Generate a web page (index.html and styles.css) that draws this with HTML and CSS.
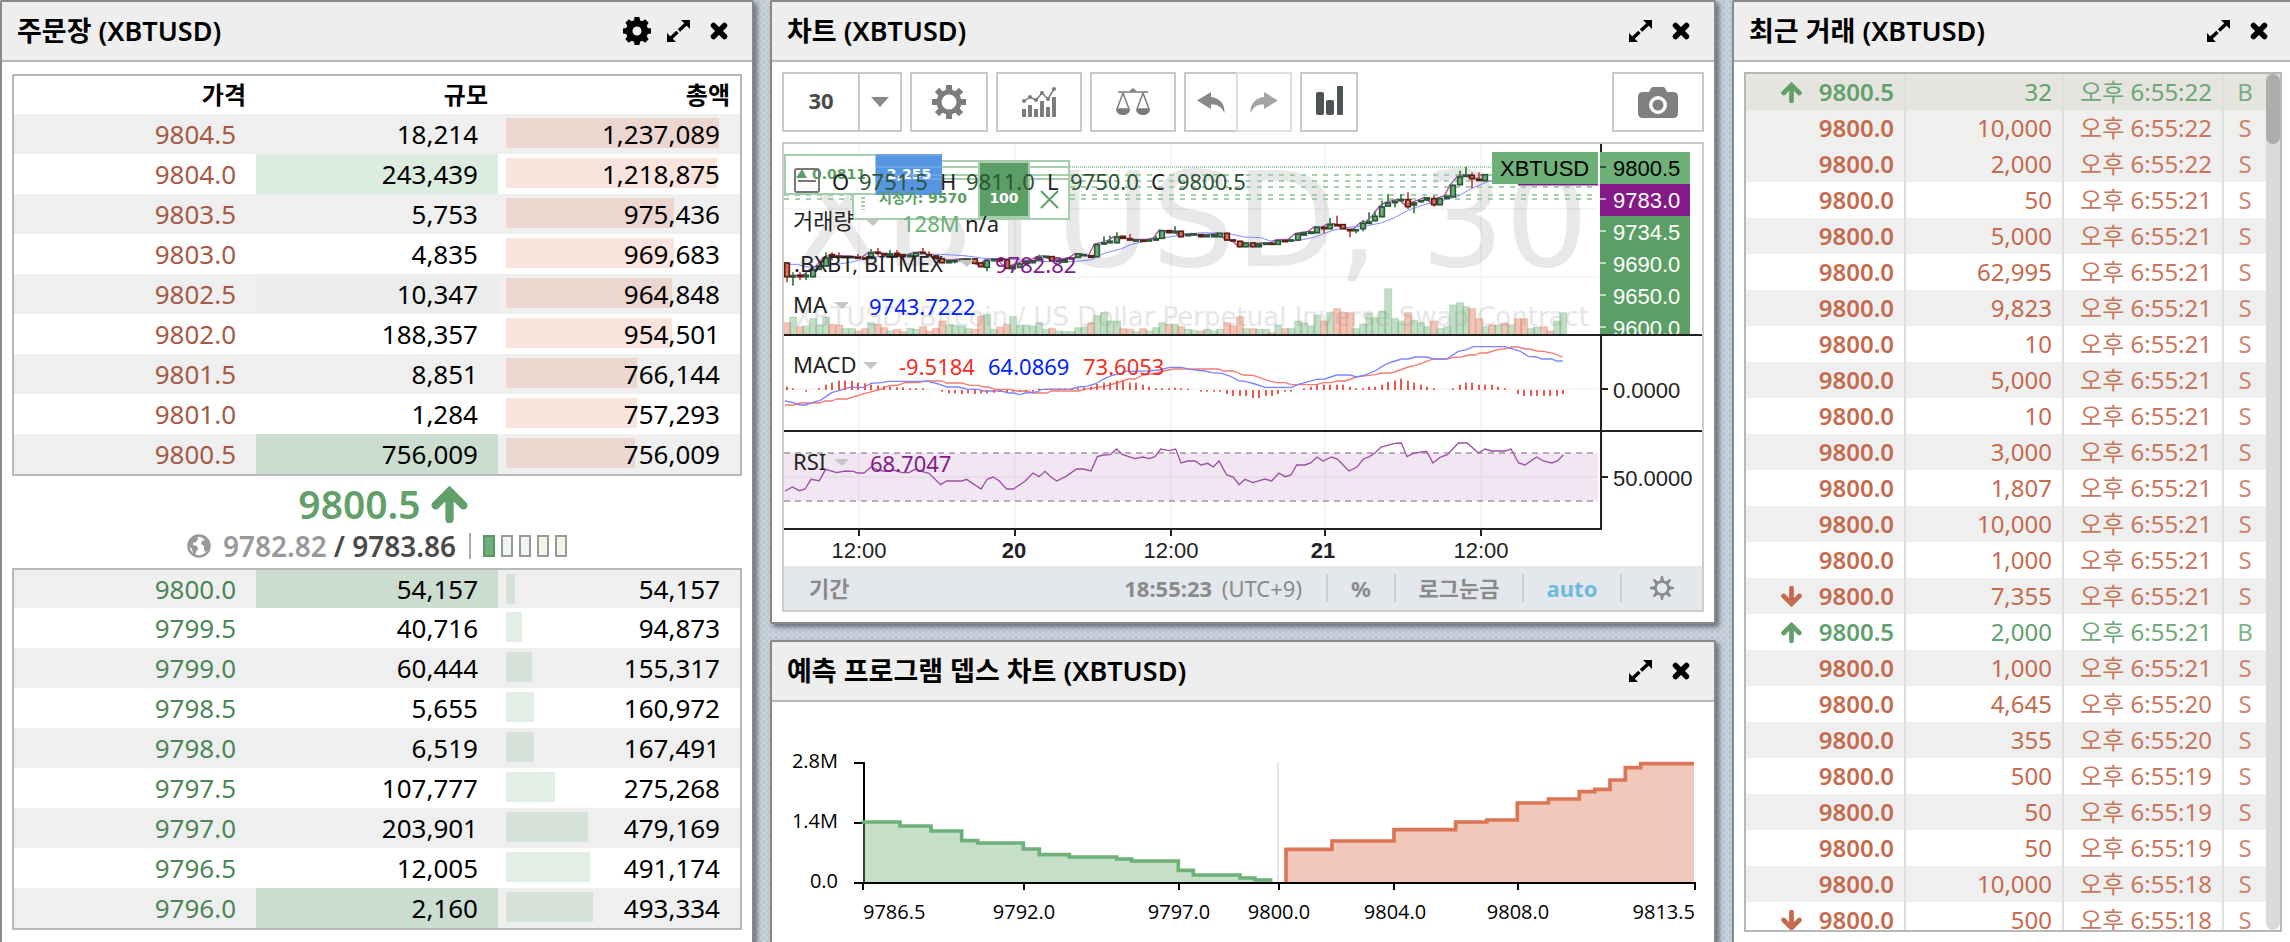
FILE: index.html
```html
<!DOCTYPE html>
<html lang="ko">
<head>
<meta charset="utf-8">
<title>XBTUSD</title>
<link rel="stylesheet" href="styles.css">
</head>
<body>
<svg class="sprite" aria-hidden="true">
  <symbol id="i-gear" viewBox="0 0 34 34">
    <g fill="currentColor">
      <path fill-rule="evenodd" d="M17 4.500a12.500 12.500 0 1 0 0 25a12.500 12.500 0 1 0 0-25zM17 9.500a7.500 7.500 0 1 1 0 15a7.500 7.500 0 1 1 0-15z"/>
      <path id="tooth" d="M14 0h6v6h-6z"/>
      <use href="#tooth" transform="rotate(45 17 17)"/><use href="#tooth" transform="rotate(90 17 17)"/>
      <use href="#tooth" transform="rotate(135 17 17)"/><use href="#tooth" transform="rotate(180 17 17)"/>
      <use href="#tooth" transform="rotate(225 17 17)"/><use href="#tooth" transform="rotate(270 17 17)"/>
      <use href="#tooth" transform="rotate(315 17 17)"/>
    </g>
  </symbol>
  <symbol id="i-cog" viewBox="0 0 34 34">
    <g fill="currentColor">
      <path fill-rule="evenodd" d="M17 3.500a13.500 13.500 0 1 0 0 27a13.500 13.500 0 1 0 0-27zM17 11.500a5.500 5.500 0 1 1 0 11a5.500 5.500 0 1 1 0-11z"/>
      <path id="cogtooth" d="M14 0h6l1 6h-8z"/>
      <use href="#cogtooth" transform="rotate(45 17 17)"/><use href="#cogtooth" transform="rotate(90 17 17)"/>
      <use href="#cogtooth" transform="rotate(135 17 17)"/><use href="#cogtooth" transform="rotate(180 17 17)"/>
      <use href="#cogtooth" transform="rotate(225 17 17)"/><use href="#cogtooth" transform="rotate(270 17 17)"/>
      <use href="#cogtooth" transform="rotate(315 17 17)"/>
    </g>
  </symbol>
  <symbol id="i-sun" viewBox="0 0 24 24">
    <circle cx="12" cy="12" r="6.500" fill="none" stroke="currentColor" stroke-width="2.500"/>
    <g fill="currentColor">
      <path id="ray" d="M10 5L11 0h2l1 5z"/>
      <use href="#ray" transform="rotate(45 12 12)"/><use href="#ray" transform="rotate(90 12 12)"/>
      <use href="#ray" transform="rotate(135 12 12)"/><use href="#ray" transform="rotate(180 12 12)"/>
      <use href="#ray" transform="rotate(225 12 12)"/><use href="#ray" transform="rotate(270 12 12)"/>
      <use href="#ray" transform="rotate(315 12 12)"/>
    </g>
  </symbol>
  <symbol id="i-expand" viewBox="0 0 23 22">
    <path d="M14 0h9v9zM0 13v9h9z" fill="currentColor"/>
    <path d="M19 4l-7 6.500M10.500 12l-7 6.500" stroke="currentColor" stroke-width="3.500" fill="none"/>
  </symbol>
  <symbol id="i-close" viewBox="0 0 18 18">
    <path d="M3.500 3.500l11 11M14.500 3.500l-11 11" stroke="currentColor" stroke-width="5.500" stroke-linecap="round"/>
  </symbol>
  <symbol id="i-up" viewBox="0 0 20 20">
    <path d="M10 18V4M2.500 10.500L10 3l7.500 7.500" stroke="currentColor" stroke-width="4.500" stroke-linecap="round" fill="none"/>
  </symbol>
  <symbol id="i-down" viewBox="0 0 20 20">
    <path d="M10 2v14M2.500 9.500L10 17l7.500-7.500" stroke="currentColor" stroke-width="4.500" stroke-linecap="round" fill="none"/>
  </symbol>
  <symbol id="i-globe" viewBox="0 0 24 24">
    <circle cx="12" cy="12" r="10.500" fill="none" stroke="currentColor" stroke-width="2.500"/>
    <path fill="currentColor" d="M5 4l5-2 1 3-2 3-3 1 0 2 4 1 1 3-2 3-1 4-2-3-1-4-3-3-1-3zM15 3l5 3 2 6-1 4-3 2-1-3v-3l-3-2 1-3 3-1-3-2z"/>
  </symbol>
</svg>

<main class="workspace">
  <section class="panel">
    <header class="panel-head">
      <h2>주문장 (XBTUSD)</h2>
      <div class="head-tools">
        <button aria-label="설정"><svg class="ic-cog"><use href="#i-cog"/></svg></button>
        <button aria-label="확대"><svg class="ic-expand"><use href="#i-expand"/></svg></button>
        <button aria-label="닫기"><svg class="ic-close"><use href="#i-close"/></svg></button>
      </div>
    </header>
    <div class="book">
      <table class="orders asks">
        <thead><tr><th>가격</th><th>규모</th><th>총액</th></tr></thead>
        <tbody id="asks"></tbody>
      </table>
      <div class="ticker">
        <div class="last">9800.5<svg class="ic-last"><use href="#i-up"/></svg></div>
        <div class="marks">
          <svg class="ic-globe"><use href="#i-globe"/></svg>
          <span class="index">9782.82</span><span class="mark">/ 9783.86</span>
          <span class="level"><i class="on"></i><i></i><i></i><i class="warm"></i><i class="warm"></i></span>
        </div>
      </div>
      <table class="orders bids"><tbody id="bids"></tbody></table>
    </div>
  </section>

  <div class="column">
    <section class="panel">
      <header class="panel-head">
        <h2>차트 (XBTUSD)</h2>
        <div class="head-tools">
          <button aria-label="확대"><svg class="ic-expand"><use href="#i-expand"/></svg></button>
          <button aria-label="닫기"><svg class="ic-close"><use href="#i-close"/></svg></button>
        </div>
      </header>
      <div class="chart-body">
        <div class="toolbar">
          <div class="group">
            <button class="interval">30</button>
            <button class="drop" aria-label="간격"><svg viewBox="0 0 18 10"><path d="M0 0h18L9 10z" fill="#888"/></svg></button>
          </div>
          <button class="tool w78" aria-label="속성"><svg width="34" height="34"><use href="#i-gear"/></svg></button>
          <button class="tool w86" aria-label="지표">
            <svg width="34" height="30" viewBox="0 0 34 30"><g fill="#7c7c7c"><path d="M0 22h4v8H0zM6 18h4v12H6zM12 22h4v8h-4zM18 14h4v16h-4zM24 20h4v10h-4zM30 10h4v20h-4z"/><circle cx="2" cy="14" r="2"/><circle cx="8" cy="10" r="2"/><circle cx="14" cy="13" r="2"/><circle cx="20" cy="6" r="2"/><circle cx="26" cy="12" r="2"/><circle cx="32" cy="2" r="2"/></g><path d="M2 14l6-4 6 3 6-7 6 6 6-10" fill="none" stroke="#7c7c7c" stroke-width="1.500"/></svg>
          </button>
          <button class="tool w86" aria-label="비교">
            <svg width="34" height="28" viewBox="0 0 34 28"><g fill="none" stroke="#7c7c7c" stroke-width="1.500"><path d="M2 4h30M7 5L1 21M7 5l6 16M27 5l-6 16M27 5l6 16M1 21h12M21 21h12"/></g><path fill="#7c7c7c" d="M0 21h14c0 8-14 8-14 0zM20 21h14c0 8-14 8-14 0zM13 3.500L17 0l4 3.500z"/></svg>
          </button>
          <div class="group">
            <button class="undo" aria-label="실행 취소"><svg width="28" height="21" viewBox="0 0 28 21"><path fill="#888" d="M0 8.500L14 0v5c9 1 14 7 13.500 16C24 14 20 12.500 14 12.500V17z"/></svg></button>
            <button class="redo" aria-label="다시 실행"><svg width="28" height="21" viewBox="0 0 28 21"><path fill="#a5a5a5" d="M28 8.500L14 0v5C5 6 0 12 .5 21 4 14 8 12.500 14 12.500V17z"/></svg></button>
          </div>
          <button class="tool w58" aria-label="차트 유형"><svg class="bars" width="27" height="29" viewBox="0 0 27 29"><g fill="#4d5456"><rect y="6" width="8" height="23" rx="2"/><rect x="10" y="14" width="8" height="15" rx="2"/><rect x="21" width="6" height="29" rx="1"/></g></svg></button>
          <button class="tool w92 camera" aria-label="스크린샷"><svg width="40" height="31" viewBox="0 0 40 31"><path fill="#808080" fill-rule="evenodd" d="M5 5h6l2-4q1-1 2-1h10q1 0 2 1l2 4h6q5 0 5 5v16q0 5-5 5H5q-5 0-5-5V10q0-5 5-5zM20 9a9 9 0 1 0 0 18a9 9 0 1 0 0-18z"/><circle cx="20" cy="18" r="5.500" fill="#808080"/></svg></button>
        </div>
        <div class="chart-frame">
          <svg id="price-chart" viewBox="784 144 918 422" role="img" aria-label="XBTUSD 30"></svg>
          <footer class="status">
            <button class="range">기간</button>
            <span class="clock"><b>18:55:23</b> (UTC+9)</span>
            <button class="percent">%</button>
            <button class="log">로그눈금</button>
            <button class="auto">auto</button>
            <button class="prefs" aria-label="설정"><svg width="24" height="24"><use href="#i-sun"/></svg></button>
          </footer>
        </div>
      </div>
    </section>

    <section class="panel grow">
      <header class="panel-head">
        <h2>예측 프로그램 뎁스 차트 (XBTUSD)</h2>
        <div class="head-tools">
          <button aria-label="확대"><svg class="ic-expand"><use href="#i-expand"/></svg></button>
          <button aria-label="닫기"><svg class="ic-close"><use href="#i-close"/></svg></button>
        </div>
      </header>
      <svg class="depth" viewBox="772 702 942 240" role="img" aria-label="depth">
        <path d="M854 763h10v120M854 823h9M854 883h841v7M863 883v7M1024 883v7M1179 883v7M1279 883v7M1394 883v7M1518 883v7" fill="none" stroke="#000" stroke-width="2"/>
        <path d="M1278 762v120" stroke="#e4e8ec" stroke-width="2"/>
        <g transform="translate(765 620) scale(.33333)">
          <path fill="#6db078" fill-opacity=".4" d="M294 786V606H405V618H498V633H590V662H638V669H775V687H823V704H913V711H1055V717H1100V723H1240V751H1285V765H1425V774H1470V779H1522V786z"/>
          <path fill="none" stroke="#6db078" stroke-width="11" d="M290 606H405V618H498V633H590V662H638V669H775V687H823V704H913V711H1055V717H1100V723H1240V751H1285V765H1425V774H1470V780H1522"/>
          <g transform="translate(1425 0)">
            <path fill="#dc7556" fill-opacity=".4" d="M138 786V688H276V663H462V629H647V606H740V600H832V549H925V537H1018V515H1064V508H1110V480H1156V443H1202V431H1255V428H1362V786z"/>
            <path fill="none" stroke="#dc7556" stroke-width="11" d="M138 786V688H276V663H462V629H647V606H740V600H832V549H925V537H1018V515H1064V508H1110V480H1156V443H1202V431H1362"/>
          </g>
        </g>
        <g class="depth-labels">
          <g text-anchor="end"><text x="838" y="768">2.8M</text><text x="838" y="828">1.4M</text><text x="838" y="888">0.0</text><text x="1695" y="919">9813.5</text></g>
          <text x="863" y="919">9786.5</text>
          <g text-anchor="middle"><text x="1024" y="919">9792.0</text><text x="1179" y="919">9797.0</text><text x="1279" y="919">9800.0</text><text x="1395" y="919">9804.0</text><text x="1518" y="919">9808.0</text></g>
        </g>
      </svg>
    </section>
  </div>

  <section class="panel">
    <header class="panel-head">
      <h2>최근 거래 (XBTUSD)</h2>
      <div class="head-tools">
        <button aria-label="확대"><svg class="ic-expand"><use href="#i-expand"/></svg></button>
        <button aria-label="닫기"><svg class="ic-close"><use href="#i-close"/></svg></button>
      </div>
    </header>
    <div class="trades">
      <div class="trades-view">
        <table>
          <colgroup><col class="c1"><col class="c2"><col class="c3"><col class="c4"></colgroup>
          <tbody id="trades"></tbody>
        </table>
      </div>
      <div class="track"><div class="thumb"></div></div>
    </div>
  </section>
</main>
<script src="app.js"></script>
</body>
</html>
```

FILE: styles.css
```css
* { box-sizing: border-box; }
html, body { height: 100%; margin: 0; }
body {
  overflow: hidden;
  font-family: "Noto Sans", "Noto Sans CJK KR", sans-serif;
  color: #000;
  background-color: #c9d3dc;
  background-image:
    radial-gradient(circle at 2px 2px, rgba(100, 120, 140, .18) 1px, transparent 2px),
    radial-gradient(circle at 5px 5px, rgba(100, 120, 140, .12) 1px, transparent 2px);
  background-size: 6px 6px;
}
button { border: 0; padding: 0; margin: 0; background: none; color: inherit; font: inherit; display: flex; align-items: center; justify-content: center; }
svg { display: block; }
.sprite { position: absolute; width: 0; height: 0; }

.workspace {
  display: grid;
  grid-template-columns: 754fr 946fr 562fr;
  grid-template-rows: minmax(0, 1fr);
  gap: 16px;
  height: calc(100vh + 2px);
  margin-right: -4px;
}
.column { display: flex; flex-direction: column; gap: 16px; min-width: 0; }
.panel {
  display: flex; flex-direction: column; min-width: 0;
  background: #fff; border: 2px solid #888; border-radius: 2px;
  box-shadow: 3px 3px 5px rgba(40, 45, 55, .6);
}
.grow { flex: 1; }
.panel-head {
  flex: none; height: 60px; padding: 0 24px 0 15px;
  display: flex; align-items: center; justify-content: space-between;
  background: #eee; border-bottom: 2px solid #b8b8b8;
}
.panel-head h2 { margin: 0; font-size: 27px; line-height: 36px; font-weight: 600; }
.head-tools { display: flex; align-items: center; gap: 20px; }
.ic-cog { width: 28px; height: 28px; }
.ic-expand { width: 23px; height: 22px; }
.ic-close { width: 18px; height: 18px; }
.head-tools button:first-child:nth-last-child(3) { margin-right: -4px; }

/* order book */
.book { padding: 12px 10px; }
.orders { width: 100%; table-layout: fixed; border-spacing: 0; border: 2px solid #b8b8b8; font-size: 26px; line-height: 36px; }
.orders th { height: 38px; padding: 0 10px 0 0; text-align: right; font-size: 24px; line-height: 36px; font-weight: 600; }
.orders td { height: 40px; padding: 0 20px 0 0; text-align: right; position: relative; }
.bids tr:first-child td { height: 38px; }
.orders tbody tr:nth-child(odd) { background: #efefef; }
.asks .price { color: #a65a43; }
.bids .price { color: #4c8657; }
.orders .flash { background: #cbddcf; }
.orders .flash-soft { background: #dcecdf; }
.orders .flash-faint { background: #ebedec; }
.bar-area { position: absolute; inset: 4px 0 4px 8px; }
.bar { display: block; height: 30px; }
.asks .bar { background: rgba(220, 117, 86, .2); }
.bids .bar { background: rgba(109, 176, 120, .2); }
.amount { position: relative; }

.ticker { height: 92px; display: flex; flex-direction: column; align-items: center; }
.last { display: flex; align-items: center; gap: 10px; height: 56px; padding-left: 12px; font-size: 39px; line-height: 56px; font-weight: 600; color: #62a06b; }
.ic-last { width: 37px; height: 37px; }
.marks { display: flex; align-items: center; height: 28px; font-size: 28px; line-height: 28px; font-weight: 600; }
.ic-globe { width: 24px; height: 24px; margin-right: 12px; color: #999; }
.index { color: #999; margin-right: 7px; }
.mark { color: #4a4a4a; margin-right: 13px; }
.level { display: flex; gap: 6px; border-left: 2px solid #aaa; padding: 2px 0 2px 12px; }
.level i { width: 12px; height: 22px; border: 2px solid #999; background: #eff6f0; }
.level .on { background: #6db078; border-color: #5f9468; }
.level .warm { background: #f5f4ea; }

/* chart */
.chart-body { padding: 10px; }
.toolbar { display: flex; gap: 8px; height: 60px; margin-bottom: 10px; }
.group { display: flex; }
.tool, .group button { height: 60px; border: 2px solid #c8c8c8; color: #7c7c7c; }
.group .interval { width: 76px; padding-bottom: 4px; border-right: 0; font-size: 22px; font-weight: 700; color: #4a4a4a; }
.group .drop { width: 44px; }
.drop svg { width: 18px; height: 10px; }
.w78 { width: 78px; }
.w86 { width: 86px; }
.w58 { width: 58px; }
.w92 { width: 92px; }
.group .undo { width: 52px; border-right: 0; }
.group .redo { width: 56px; border-color: #dbe0e6; }
.bars { margin-bottom: 4px; }
.camera { margin-left: auto; }
.chart-frame { border: 2px solid #ccc; }
#price-chart { width: 100%; }
.ax { font: 22px "Liberation Sans", sans-serif; fill: #222; }
.lg { font-size: 22px; }
.wm-big { font: 132px "DejaVu Sans", sans-serif; fill: #e8e8e8; }
.wm { font: 26px "DejaVu Sans", sans-serif; fill: #e6e6e6; }
.tag { font: bold 14px "DejaVu Sans", "Noto Sans CJK KR", sans-serif; }
.status {
  display: flex; align-items: center; height: 44px; background: #e4e7ec;
  color: #8a8a8a; font-size: 22px; line-height: 28px;
}
.status button { height: 28px; border-left: 2px solid #cdd0d5; font-weight: 700; }
.status .range { border: 0; margin: 0 auto 0 25px; }
.clock { margin-right: 24px; word-spacing: normal; }
.clock b { margin-right: 4px; }
.status .percent { width: 68px; }
.status .log { width: 128px; }
.status .auto { width: 98px; color: #6bbbe0; }
.status .prefs { width: 82px; }

.depth { width: 100%; }
.depth-labels { font: 20px "Open Sans", sans-serif; }

/* recent trades */
.trades { flex: 1; min-height: 0; display: flex; margin: 10px; border: 2px solid #b8b8b8; }
.trades-view { flex: 1; min-width: 0; overflow: hidden; }
.trades table { width: 100%; table-layout: fixed; border-spacing: 0; font-size: 24px; line-height: 36px; }
.c1, .c3 { width: 160px; }
.c2 { width: 158px; }
.c4 { width: 42px; }
.trades td { height: 36px; padding: 0 10px 0 0; text-align: right; border-right: 2px solid #dedede; white-space: nowrap; }
.trades td:last-child { border: 0; padding: 0; text-align: center; opacity: .8; }
.trades .when { opacity: .9; }
.trades tr:nth-child(odd) { background: #efefef; }
.trades tr:first-child { background: #e5e4df; }
.trades tr:nth-child(2) { background: #efefed; }
.sell { color: #c56a4c; }
.buy { color: #62a06b; }
.trade-price { display: flex; align-items: center; justify-content: flex-end; gap: 17px; font-weight: 600; }
.trade-price svg { width: 21px; height: 21px; }
.track { width: 14px; background: #dadada; border-radius: 0 0 7px 7px; }
.thumb { height: 70px; background: #adadad; border-radius: 7px; }
```

FILE: app.js
```js
const el = id => document.getElementById(id);

/* Order book rows: price, size, total, bar width in %, highlight class */
const asks = [
  ['9804.5', '18,214', '1,237,089', 91, ''], ['9804.0', '243,439', '1,218,875', 90, 'flash-soft'],
  ['9803.5', '5,753', '975,436', 72, ''], ['9803.0', '4,835', '969,683', 72, ''],
  ['9802.5', '10,347', '964,848', 71, 'flash-faint'], ['9802.0', '188,357', '954,501', 71, ''],
  ['9801.5', '8,851', '766,144', 56, ''], ['9801.0', '1,284', '757,293', 56, ''],
  ['9800.5', '756,009', '756,009', 55, 'flash']
];
const bids = [
  ['9800.0', '54,157', '54,157', 4, 'flash'], ['9799.5', '40,716', '94,873', 7, ''],
  ['9799.0', '60,444', '155,317', 11, ''], ['9798.5', '5,655', '160,972', 12, ''],
  ['9798.0', '6,519', '167,491', 12, ''], ['9797.5', '107,777', '275,268', 21, ''],
  ['9797.0', '203,901', '479,169', 35, ''], ['9796.5', '12,005', '491,174', 36, ''],
  ['9796.0', '2,160', '493,334', 37, 'flash']
];
const orderRow = ([p, s, t, w, c]) =>
  `<tr><td class="price">${p}</td><td class="${c}">${s}</td><td><span class="bar-area"><span class="bar" style="width:${w}%"></span></span><span class="amount">${t}</span></td></tr>`;
el('asks').innerHTML = asks.map(orderRow).join('');
el('bids').innerHTML = bids.map(orderRow).join('');

/* Trades: size, seconds, arrow */
const trades = [
  ['32', '55:22', 'up', 'B'], ['10,000', '55:22'], ['2,000', '55:22'], ['50', '55:21'], ['5,000', '55:21'],
  ['62,995', '55:21'], ['9,823', '55:21'], ['10', '55:21'], ['5,000', '55:21'], ['10', '55:21'],
  ['3,000', '55:21'], ['1,807', '55:21'], ['10,000', '55:21'], ['1,000', '55:21'], ['7,355', '55:21', 'down'],
  ['2,000', '55:21', 'up', 'B'], ['1,000', '55:21'], ['4,645', '55:20'], ['355', '55:20'], ['500', '55:19'],
  ['50', '55:19'], ['50', '55:19'], ['10,000', '55:18'], ['500', '55:18', 'down']
];
el('trades').innerHTML = trades.map(([q, t, a, side = 'S']) =>
  `<tr class="${side === 'B' ? 'buy' : 'sell'}"><td><span class="trade-price">${a ? `<svg><use href="#i-${a}"/></svg>` : ''}${side === 'B' ? '9800.5' : '9800.0'}</span></td><td>${q}</td><td class="when">오후 6:${t}</td><td>${side}</td></tr>`).join('');

/* Candles: direction, body top, body bottom, wick top, wick bottom (units of a third of a pixel) */
const candles = `r355 400 355 415|g394 400 385 425|r392 400 385 408|g392 400 385 408|g375 400 370 400|g365 378|g340 368 325 368|r330 340 325 348|r335 340 325 340|g336 342|g336 342|r338 345 330 345|r340 345|g325 345 315 345|r323 330 312 335|r328 333|g328 336 318 336|r326 338 318 338|r330 340|g332 340|g325 338|r323 330 312 330|r330 336 322 336|r334 345|r342 358|g348 358|g348 352 348 358|g345 350|g343 348|r343 360|r355 370|g348 372 348 382|g344 352|r345 352|r345 375|g365 376|g358 372|g350 360|g348 358|g338 350 332 350|g335 342|r336 352|g348 354|g345 356|g340 346|g328 342|g330 336|r333 342|g300 340|g295 302 277 302|g290 298 275 298|g277 298 265 298|r275 285|r282 290 270 290|g286 292|r287 292|g286 291|g282 290 275 290|g258 285|r258 268|g260 268 247 268|r260 280|g270 275|g268 275|r270 280|g272 280|g270 280|g266 280|r266 290|r286 292|r290 310|g295 310|r295 310|g298 310|g296 303|r296 303|g288 303|r288 292|g286 290|g268 290|g265 275|g262 270|g248 268|r248 256 248 268|g240 256 222 256|r240 245 215 245|r240 256|r255 262 255 280|g255 262 255 268|g236 256 228 262|g232 240 205 240|g215 232 200 232|g187 220 170 220|g175 188 150 188|g170 178 170 190|g165 172 150 172|r165 190 145 195|g175 185 175 208|g168 175|g160 170|r162 184 155 188|g162 184|g155 165|g122 160|g97 124 80 124|g92 98 68 98|r92 106 85 132|r104 110 85 110|g90 112`.split('|');
const volume = [535,518,547,545,523,543,518,540,542,553,553,560,553,535,540,550,560,555,562,552,555,547,560,552,530,542,542,545,553,555,515,510,555,548,540,517,543,542,545,535,555,552,560,562,562,550,548,535,514,505,530,530,553,555,562,553,560,550,535,540,540,547,555,558,560,555,560,555,535,545,517,553,553,555,555,565,542,553,553,530,536,545,512,530,505,493,505,505,553,540,507,520,500,433,523,530,505,528,535,547,530,553,547,482,475,487,493,523,547,542,542,536,542,523,523,553,548,547,560,530,505];
const redVolume = new Set([109, 111, 113, 114, 117, 118]);
const hist = [10,5,0,-5,0,5,16,22,28,28,28,22,20,16,14,12,10,8,8,5,5,5,0,0,-5,-10,-10,-12,-10,-12,-10,-10,-8,-6,-6,-5,-5,-5,-5,4,4,4,4,4,5,5,8,10,18,22,22,28,28,22,22,16,10,5,5,5,7,5,4,0,-5,-5,-5,-5,-12,-18,-18,-18,-24,-24,-18,-18,-12,-5,-5,0,5,10,16,16,16,16,16,10,5,5,10,10,16,24,28,34,28,22,16,10,5,0,0,5,16,22,22,16,16,16,10,5,0,-12,-18,-18,-18,-18,-18,-18,-12];

const cx = i => 9 + Math.round(19.4 * i / 3) * 3;
let candleSvg = '', volSvg = '', histSvg = '', index = '';
candles.forEach((c, i) => {
  const red = c[0] === 'r';
  const [t, b, wt = t, wb = b] = c.slice(1).split(' ').map(Number);
  const x = cx(i), h = Math.max(b - t, 6), thin = h < 13;
  const dark = red ? '#5b1f17' : '#2d5537';
  candleSvg += `<path d="M${x} ${wt}V${wb}" stroke="${red ? '#c9605a' : '#4b8f59'}" stroke-width="6"/>` +
    `<rect x="${x - 7}" y="${t + 2}" width="14" height="${Math.max(h - 4, 3)}" stroke="${dark}" stroke-width="5" fill="${thin ? dark : red ? '#dc7556' : '#6db078'}"/>`;
  index += `${x - 8} ${red ? b - 6 : t} `;
});
volume.forEach((v, i) => {
  const red = candles[i] ? candles[i][0] === 'r' : redVolume.has(i);
  volSvg += `<rect x="${cx(i) - 10}" y="${v + 1}" width="21" height="${572 - v}" fill="${red ? '#dc7556' : '#6db078'}" fill-opacity=".42" stroke="${red ? '#dc7556' : '#6db078'}" stroke-opacity=".3" stroke-width="3"/>`;
});
hist.forEach((h, i) => {
  if (h) histSvg += `<rect x="${cx(i) - 3}" y="${h > 0 ? 738 - h : 738}" width="6" height="${Math.abs(h)}" fill="#ea5a50"/>`;
});

const macd = '60,243 85,248 105,255 122,255 150,245 165,242 200,218 235,208 255,202 295,202 318,190 350,188 370,184 490,184 520,192 545,201 580,201 610,208 640,208 655,213 710,213 730,219 748,219 762,224 780,219 815,216 830,208 920,207 940,201 965,199 990,192 1020,175 1045,165 1070,160 1075,154 1150,153 1180,150 1215,142 1250,142 1275,148 1320,153 1340,158 1370,160 1395,168 1420,182 1440,184 1470,192 1500,202 1580,202 1600,193 1655,178 1680,177 1715,165 1755,165 1775,171 1800,165 1830,153 1855,137 1880,126 1910,117 1930,117 1950,111 1985,111 2005,117 2045,117 2080,94 2105,89 2125,80 2220,80 2265,93 2290,109 2315,111 2330,117 2360,117 2375,123 2393,123';
const signal = '60,255 85,255 105,249 165,249 180,243 200,243 215,237 245,237 300,220 350,207 370,198 400,195 420,188 460,188 480,183 530,183 545,189 590,189 615,196 640,196 655,201 670,201 690,208 735,208 755,213 790,213 800,219 845,219 860,213 940,213 970,206 1015,200 1035,195 1090,177 1110,177 1135,165 1170,160 1195,153 1225,147 1360,147 1375,153 1405,153 1435,165 1465,166 1510,182 1535,188 1560,188 1580,194 1655,194 1675,188 1700,188 1715,183 1740,183 1775,171 1805,167 1830,164 1850,159 1880,159 1930,141 1950,137 2005,117 2045,117 2065,112 2090,111 2110,105 2130,105 2145,99 2165,99 2200,88 2215,87 2240,81 2260,81 2280,87 2295,87 2315,93 2335,94 2365,100 2393,111';
const rsi = '60,513 82,501 103,512 120,507 138,478 163,482 182,448 215,458 240,453 265,454 278,459 297,459 318,441 340,450 360,454 385,450 412,458 432,458 450,448 470,454 492,460 527,494 545,483 590,483 605,478 648,507 667,477 685,471 703,483 725,507 745,507 780,484 804,459 822,470 840,454 858,471 875,483 903,469 935,447 955,447 978,453 997,410 1015,405 1035,404 1055,387 1073,404 1110,416 1133,411 1153,416 1170,410 1187,387 1212,392 1232,387 1248,429 1268,423 1290,423 1308,435 1328,430 1345,441 1362,423 1385,465 1405,471 1422,494 1440,478 1463,488 1500,477 1520,483 1542,459 1560,470 1578,465 1595,435 1620,435 1637,429 1656,411 1674,423 1700,411 1717,417 1752,453 1775,442 1795,417 1813,410 1830,399 1848,381 1890,370 1909,369 1926,410 1945,400 1985,394 2004,429 2025,412 2047,404 2080,369 2107,369 2140,399 2160,387 2180,393 2220,393 2238,387 2261,429 2280,435 2315,411 2335,423 2360,429 2377,423 2395,405';
const ma = '0,361 40,361 60,368 100,370 150,362 200,355 260,340 330,334 400,330 470,331 540,335 600,343 680,345 760,352 850,354 920,348 960,328 1010,315 1040,302 1090,290 1160,278 1230,268 1262,266 1340,270 1380,279 1430,281 1460,291 1490,291 1540,290 1590,280 1650,258 1700,249 1740,247 1790,237 1830,222 1870,200 1920,182 1980,168 2020,158 2060,135 2110,113 2150,105';

const tri = (x, y) => `<path d="M${x} ${y}h15l-7 7z" fill="#c5c5c5"/>`;
const txt = (x, y, s, fill = '#222') => `<text class="lg" x="${x}" y="${y}" fill="${fill}">${s}</text>`;
const dash = y => `M784 ${y}h814`;

el('price-chart').innerHTML = `
<clipPath id="pane"><path d="M784 144h918v190H784z"/></clipPath>
<text class="wm-big" x="1191" y="266" text-anchor="middle">XBTUSD, 30</text>
<text class="wm" x="1192" y="326" text-anchor="middle">XBTUSD: Bitcoin / US Dollar Perpetual Inverse Swap Contract</text>
<path d="M859 144v384M1015 144v384M1171 144v384M1325 144v384M1481 144v384M784 209h814M784 277h814M784 389h814M784 477h814" stroke="#000" stroke-opacity=".04" stroke-width="2"/>
<path d="${dash(167)}" stroke="#a5cfac" stroke-width="2" stroke-dasharray="1 1"/>
<path d="${[175, 181, 187, 195, 199].map(dash).join('')}" stroke="#a5cfac" stroke-width="2" stroke-dasharray="5 6"/>
<path d="M784 453h814v48H784z" fill="#831a87" fill-opacity=".11"/>
<path d="M784 453h814M784 501h814" stroke="#b5acb5" stroke-width="2" stroke-dasharray="6 5"/>
<g transform="translate(784 144) scale(.33333)" fill="none">
  ${volSvg}
  <polyline points="${index}" stroke="#a550a8" stroke-width="4"/>
  <polyline points="${ma}" stroke="#8088ff" stroke-width="3"/>
  ${candleSvg}
  <g transform="translate(-57 528)" stroke-width="4">
    <polyline points="${signal}" stroke="#f47a74"/>
    <polyline points="${macd}" stroke="#7c84ff"/>
    <polyline points="${rsi}" stroke="#9c50a4"/>
  </g>
  ${histSvg}
</g>
<g stroke="#a5cfac" stroke-width="2">
  <path d="M853 161h216v58H853z" fill="#fff"/>
  <path d="M853 167h216M853 175h216M853 179h216"/>
  <path d="M785 155h91v39h-91z" fill="#fff"/>
  <path d="M979 162h50v55h-50z" fill="#5b9f66"/>
</g>
<path d="M876 154h66v41h-66z" fill="#5595e2"/>
<path d="M876 167h66M876 175h66M876 179h66M877 155h64" stroke="#7db0ee" stroke-opacity=".6" stroke-width="2"/>
<path d="M863 197v13" stroke="#a5cfac" stroke-width="4" stroke-dasharray="2 2"/>
<g class="tag">
  <text x="812" y="179" fill="#5b9f66">0.0811</text><path d="M796 178h11l-5-9z" fill="#5b9f66"/>
  <text x="909" y="179" fill="#fff" text-anchor="middle">2,255</text>
  <text x="879" y="203" fill="#5b9f66">지정가: 9570</text>
  <text x="1004" y="203" fill="#fff" text-anchor="middle">100</text>
</g>
<path d="M1041 191l17 17M1058 191l-17 17" stroke="#5b9f66" stroke-width="2"/>
<rect x="795" y="169" width="24" height="23" rx="2" fill="none" stroke="#777" stroke-width="2"/><path d="M798 181h18" stroke="#777" stroke-width="2"/>
${txt(832, 190, 'O')}${txt(859, 190, '9751.5', '#2d5537')}${txt(940, 190, 'H')}${txt(966, 190, '9811.0', '#2d5537')}${txt(1047, 190, 'L')}${txt(1070, 190, '9750.0', '#2d5537')}${txt(1151, 190, 'C')}${txt(1177, 190, '9800.5', '#2d5537')}
${txt(793, 229, '거래량')}${tri(865, 219)}${txt(902, 232, '128M', '#6db078')}${txt(965, 232, 'n/a')}
${txt(794, 272, '.BXBT, BITMEX')}${tri(959, 260)}${txt(995, 273, '9782.82', '#831a87')}
${txt(793, 313, 'MA')}${tri(834, 302)}${txt(869, 315, '9743.7222', '#0022ff')}
${txt(793, 373, 'MACD')}${tri(863, 362)}${txt(899, 375, '-9.5184', '#f03022')}${txt(988, 375, '64.0869', '#0022ff')}${txt(1083, 375, '73.6053', '#f03022')}
${txt(793, 470, 'RSI')}${tri(834, 459)}${txt(870, 472, '68.7047', '#831a87')}
<path d="M1518 184h80" stroke="#831a87" stroke-width="3"/>
<path d="M1492 152h106v32h-106z" fill="#6db078"/>
<path d="M1601 144v385M784 335h918M784 431h918M784 529h818M1601 389h7M1601 477h7M859 529v7M1015 529v7M1171 529v7M1325 529v7M1481 529v7" stroke="#222" stroke-width="2" fill="none"/>
<path d="M1600 152h90v32h-90z" fill="#6db078"/><path d="M1600 184h90v32h-90z" fill="#831a87"/><path d="M1600 216h90v118h-90z" fill="#5b9f66"/>
<path d="M1600 167h6" stroke="#2d5537" stroke-width="2"/>
<path d="M1600 199h6M1600 231h6M1600 263h6M1600 295h6M1600 327h6" stroke="#fff" stroke-opacity=".6" stroke-width="2"/>
<g class="ax">
  <text x="1500" y="176" fill="#000">XBTUSD</text><text x="1613" y="176" fill="#000">9800.5</text>
  <g fill="#fff" clip-path="url(#pane)"><text x="1613" y="208">9783.0</text><text x="1613" y="240">9734.5</text><text x="1613" y="272">9690.0</text><text x="1613" y="304">9650.0</text><text x="1613" y="336">9600.0</text></g>
  <text x="1613" y="398">0.0000</text><text x="1613" y="486">50.0000</text>
  <g text-anchor="middle"><text x="859" y="558">12:00</text><text x="1014" y="558" font-weight="bold">20</text><text x="1171" y="558">12:00</text><text x="1323" y="558" font-weight="bold">21</text><text x="1481" y="558">12:00</text></g>
</g>`;
```
